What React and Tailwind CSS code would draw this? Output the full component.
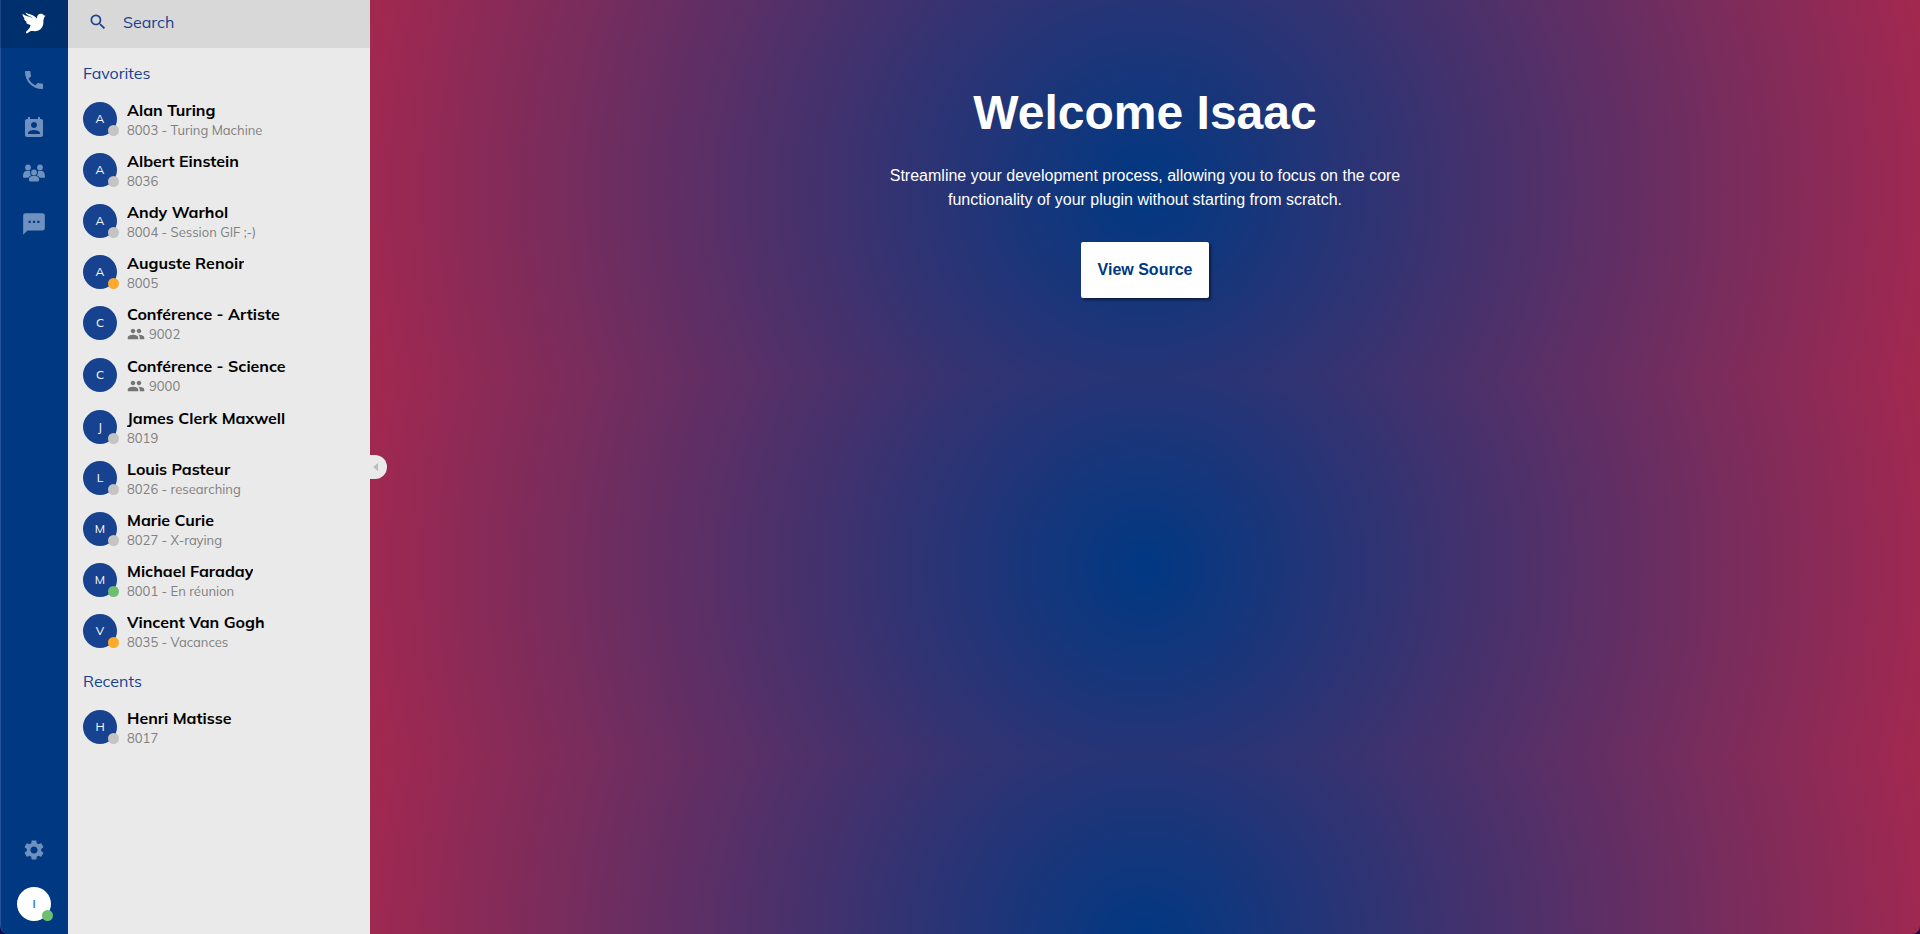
import { MdPhone, MdSearch, MdSettings, MdPeople } from "react-icons/md";

const favorites = [
  { name: "Alan Turing", detail: "8003 - Turing Machine", status: "offline" },
  { name: "Albert Einstein", detail: "8036", status: "offline" },
  { name: "Andy Warhol", detail: "8004 - Session GIF ;-)", status: "offline" },
  { name: "Auguste Renoir", detail: "8005", status: "away" },
  { name: "Conférence - Artiste", detail: "9002", room: true },
  { name: "Conférence - Science", detail: "9000", room: true },
  { name: "James Clerk Maxwell", detail: "8019", status: "offline" },
  { name: "Louis Pasteur", detail: "8026 - researching", status: "offline" },
  { name: "Marie Curie", detail: "8027 - X-raying", status: "offline" },
  { name: "Michael Faraday", detail: "8001 - En réunion", status: "available" },
  { name: "Vincent Van Gogh", detail: "8035 - Vacances", status: "away" },
];

const recents = [{ name: "Henri Matisse", detail: "8017", status: "offline" }];

const statusColors = {
  offline: "bg-[#c4c4c4]",
  away: "bg-[#fda92c]",
  available: "bg-[#6cbf6e]",
};

function StatusDot({ status }) {
  return (
    <span
      aria-label={status}
      className={`absolute -right-0.5 bottom-0 size-[11px] rounded-full ${statusColors[status]}`}
    />
  );
}

function Contact({ contact }) {
  return (
    <li>
      <a href="#contact" className={`flex items-start gap-2.5 ${contact.room ? "h-[52px]" : "h-[51px]"}`}>
        <span className="relative mt-0.5 flex size-[34px] shrink-0 items-center justify-center rounded-full bg-[#17428f] text-xs text-white">
          {contact.name[0]}
          {contact.status && <StatusDot status={contact.status} />}
        </span>
        <span className="min-w-0">
          <span className="block truncate text-base leading-5 font-bold text-black">{contact.name}</span>
          <span className="flex items-center gap-1 text-[13px] leading-5 text-[#808080]">
            {contact.room && <MdPeople className="size-[18px] text-[#757575]" />}
            {contact.detail}
          </span>
        </span>
      </a>
    </li>
  );
}

function Section({ title, contacts, className }) {
  return (
    <section className={className}>
      <h2 className="mb-[15px] text-base leading-6 text-[#17428f]">{title}</h2>
      <ul>
        {contacts.map((contact) => (
          <Contact key={contact.name} contact={contact} />
        ))}
      </ul>
    </section>
  );
}

function DoveIcon() {
  return (
    <svg viewBox="0 0 24 24" className="size-6" fill="currentColor" aria-hidden="true">
      <path d="M3.400 1.500C6 3.300 10 3.200 13.300 6c.5.400 1 .9 1.500 1.400.2-2.600 1.600-4.600 4-4.600 1.500 0 2.600.6 3.200 1.600l1.700.4-1.400 1.300c-.3 1.500-.9 2.600-.9 4.200.3 5-2.600 9.700-7.900 9.900-2 .1-3.700-.3-5.200.1-1.200.3-1.900 1.600-3.200 2-.9.200-1.300-.3-1.100-1 .3-1.200 2-2.300 3.100-3.700.8-1.100 1-2.400 1.500-3.700-2.300-.2-3.900-1-4.700-2.600l1.500-.1C3.400 10.400 2.200 9 1.900 7.300l1.200.5C1.600 6.400.5 4.600.5 2.700 3 5 7.500 5.200 11 7.400 8.200 4.900 4.500 4.600 3.400 1.500z" />
    </svg>
  );
}

function ContactsIcon() {
  return (
    <svg viewBox="0 0 24 24" className="size-6" fill="currentColor" aria-hidden="true">
      <path d="M19 3h-1V1h-2v2H8V1H6v2H5c-1.11 0-2 .9-2 2v14c0 1.1.89 2 2 2h14c1.1 0 2-.9 2-2V5c0-1.1-.9-2-2-2zm-7 3c1.66 0 3 1.34 3 3s-1.34 3-3 3-3-1.34-3-3 1.34-3 3-3zm6 12H6v-1c0-2 4-3.1 6-3.1s6 1.1 6 3.1v1z" />
    </svg>
  );
}

function GroupIcon() {
  return (
    <svg viewBox="0 0 24 26" className="h-[26px] w-6" fill="currentColor" aria-hidden="true">
      <circle cx="6" cy="4.500" r="2.900" />
      <circle cx="18" cy="4.500" r="2.900" />
      <path d="M4.300 8h3.400l.5.200c-.4 1.900.1 3.400 1.200 4.400-1.500.4-2.500 1.100-3 2.200H2.300c-.9 0-1.400-.5-1.300-1.400C1.200 10.300 2 8 4.300 8zM19.700 8h-3.400l-.5.200c.4 1.900-.1 3.400-1.200 4.400 1.500.4 2.500 1.100 3 2.200h4.100c.9 0 1.400-.5 1.300-1.400C22.800 10.300 22 8 19.700 8z" />
      <circle cx="12" cy="9.500" r="2.900" />
      <path d="M10.400 13.100h3.200c2.300 0 3.300 1.500 3.500 3.500.1 1.200-.4 1.900-1.500 1.900H8.400c-1.100 0-1.600-.7-1.500-1.900.2-2 1.200-3.500 3.500-3.500z" />
    </svg>
  );
}

function ChatIcon() {
  return (
    <svg viewBox="0 0 24 24" className="size-[26px]" fill="currentColor" aria-hidden="true">
      <path d="M20 2H4c-1.100 0-1.990.9-1.990 2L2 22l4-4h14c1.100 0 2-.9 2-2V4c0-1.100-.9-2-2-2zM9 11H7V9h2v2zm4 0h-2V9h2v2zm4 0h-2V9h2v2z" />
    </svg>
  );
}

function NavButton({ label, children }) {
  return (
    <button type="button" aria-label={label} className="flex h-12 w-full items-center justify-center text-[#6f91bf]">
      {children}
    </button>
  );
}

export default function App() {
  return (
    <div className="bg-[#150c4c]">
      <div className="flex min-h-screen overflow-hidden rounded-b-lg font-['Mulish','Muli','Open_Sans',sans-serif]">
        <nav className="flex w-[68px] shrink-0 flex-col items-center rounded-bl-lg bg-[#003882] shadow-[inset_1px_0_0_#24559a]">
          <a href="#home" aria-label="Home" className="flex h-12 w-full items-center justify-center bg-black/15 pb-0.5 text-white">
            <DoveIcon />
          </a>
          <div className="mt-2 w-full">
            <NavButton label="Calls"><MdPhone className="size-6" /></NavButton>
            <NavButton label="Contacts"><ContactsIcon /></NavButton>
            <NavButton label="Groups"><GroupIcon /></NavButton>
            <NavButton label="Messages"><ChatIcon /></NavButton>
          </div>
          <div className="mt-auto flex w-full flex-col items-center gap-[13px] pb-[13px]">
            <NavButton label="Settings"><MdSettings className="size-6" /></NavButton>
            <button type="button" aria-label="Profile" className="relative flex size-[34px] items-center justify-center rounded-full bg-white text-xs text-[#003882]">
              I
              <StatusDot status="available" />
            </button>
          </div>
        </nav>

        <aside className="relative w-[302px] shrink-0 bg-[#eaeaea]">
          <label className="flex h-12 items-center gap-[15px] bg-[#d8d8d8] px-5 pb-1 text-[#17428f]">
            <MdSearch className="size-5 shrink-0" />
            <input
              type="search"
              aria-label="Search"
              placeholder="Search"
              className="w-full min-w-0 bg-transparent text-base outline-none placeholder:text-[#17428f]"
            />
          </label>
          <div className="px-[15px] pt-[13px]">
            <Section title="Favorites" contacts={favorites} />
            <Section title="Recents" contacts={recents} className="mt-1.5" />
          </div>
          <button
            type="button"
            aria-label="Collapse panel"
            className="absolute top-1/2 left-full z-10 flex h-6 w-[17px] -translate-y-1/2 items-center justify-center rounded-r-full bg-[#eaeaea] pr-1.5 text-[#bdbdbd]"
          >
            <svg viewBox="0 0 6 8" className="h-2 w-1.5" fill="currentColor" aria-hidden="true">
              <path d="M5 0v8L0 4z" />
            </svg>
          </button>
        </aside>

        <main className="flex-1 bg-[radial-gradient(circle,#003882,#a3284f)] bg-[length:100%_378px] px-8 pt-[81px] text-center font-['Liberation_Sans',Arial,sans-serif] text-white">
          <h1 className="text-5xl leading-16 font-bold">Welcome Isaac</h1>
          <p className="mx-auto mt-[19px] max-w-[560px] text-base leading-6">
            Streamline your development process, allowing you to focus on the core functionality of your plugin without
            starting from scratch.
          </p>
          <a
            href="#source"
            className="mt-[30px] inline-flex h-14 items-center rounded-xs bg-white px-[17px] text-base font-bold text-[#003882] shadow-[2px_2px_3px_rgba(0,0,0,0.5)]"
          >
            View Source
          </a>
        </main>
      </div>
    </div>
  );
}
